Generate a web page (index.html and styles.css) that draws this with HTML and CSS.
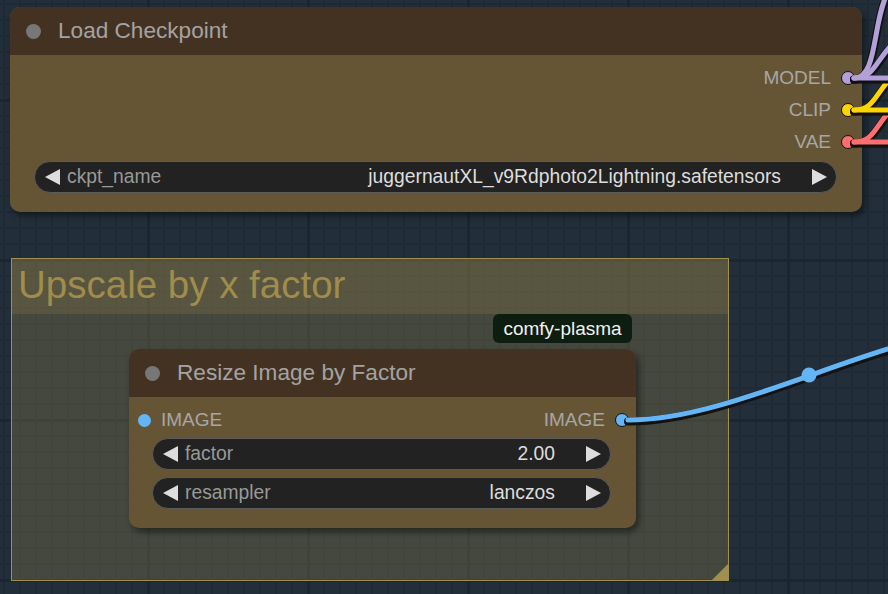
FILE: index.html
```
<!DOCTYPE html>
<html lang="en">
<head>
    <meta charset="UTF-8">
    <meta name="viewport" content="width=device-width, initial-scale=1.0">
    <title>Workflow</title>
    <link rel="stylesheet" href="styles.css">
</head>
<body>
    <div class="canvas">
        <div class="group">
            <div class="group-title">Upscale by x factor</div>
            <span class="group-resize"></span>
        </div>

        <div class="node node-ckpt">
            <div class="node-header">
                <span class="node-dot"></span>
                <span class="node-title">Load Checkpoint</span>
            </div>
            <div class="node-body">
                <div class="slot slot-out">
                    <span class="slot-label">MODEL</span>
                    <span class="slot-dot model"></span>
                </div>
                <div class="slot slot-out">
                    <span class="slot-label">CLIP</span>
                    <span class="slot-dot clip"></span>
                </div>
                <div class="slot slot-out">
                    <span class="slot-label">VAE</span>
                    <span class="slot-dot vae"></span>
                </div>
                <div class="widget">
                    <span class="arrow arrow-left"></span>
                    <span class="w-label">ckpt_name</span>
                    <span class="w-value">juggernautXL_v9Rdphoto2Lightning.safetensors</span>
                    <span class="arrow arrow-right"></span>
                </div>
            </div>
        </div>

        <div class="badge">comfy-plasma</div>

        <div class="node node-resize">
            <div class="node-header">
                <span class="node-dot"></span>
                <span class="node-title">Resize Image by Factor</span>
            </div>
            <div class="node-body">
                <div class="slot slot-io">
                    <span class="slot-in">
                        <span class="slot-dot image in"></span>
                        <span class="slot-label">IMAGE</span>
                    </span>
                    <span class="slot-out">
                        <span class="slot-label">IMAGE</span>
                        <span class="slot-dot image"></span>
                    </span>
                </div>
                <div class="widget">
                    <span class="arrow arrow-left"></span>
                    <span class="w-label">factor</span>
                    <span class="w-value">2.00</span>
                    <span class="arrow arrow-right"></span>
                </div>
                <div class="widget">
                    <span class="arrow arrow-left"></span>
                    <span class="w-label">resampler</span>
                    <span class="w-value">lanczos</span>
                    <span class="arrow arrow-right"></span>
                </div>
            </div>
        </div>

        <!-- links -->
        <svg class="links" width="888" height="594" viewBox="0 0 888 594">
            <g fill="none" stroke-linecap="round">
                <path class="link-shadow" d="M854,142 L900,142"/>
                <path class="link-shadow" d="M854,142 C876,142 874,124 900,100"/>
                <path d="M854,142 L900,142" stroke="#ff6e6e" stroke-width="5"/>
                <path d="M854,142 C876,142 874,124 900,100" stroke="#ff6e6e" stroke-width="5"/>
                <path class="link-shadow" d="M854,110 L900,110"/>
                <path class="link-shadow" d="M854,110 C876,110 874,92 900,68"/>
                <path d="M854,110 L900,110" stroke="#ffd500" stroke-width="5"/>
                <path d="M854,110 C876,110 874,92 900,68" stroke="#ffd500" stroke-width="5"/>
                <path class="link-shadow" d="M854,78 L900,78"/>
                <path class="link-shadow" d="M854,78 C876,78 874,60 900,36"/>
                <path class="link-shadow" d="M854,78 C878,78 872,22 888,-8"/>
                <path d="M854,78 L900,78" stroke="#b3a0d9" stroke-width="5"/>
                <path d="M854,78 C876,78 874,60 900,36" stroke="#b3a0d9" stroke-width="5"/>
                <path d="M854,78 C878,78 872,22 888,-8" stroke="#b3a0d9" stroke-width="5"/>
                <path class="link-shadow" d="M628,420 C740,420 884,330 990,330"/>
                <path d="M628,420 C740,420 884,330 990,330" stroke="#64b5f6" stroke-width="5"/>
            </g>
            <circle cx="809" cy="375" r="7.5" fill="#64b5f6"/>
        </svg>
    </div>
</body>
</html>
```
FILE: styles.css
```
body {
    margin: 0;
    padding: 0;
    font-family: "Liberation Sans", Arial, sans-serif;
    background-color: #222f3b;
    overflow: hidden;
}
.canvas {
    position: relative;
    width: 888px;
    height: 594px;
    overflow: hidden;
    background-color: #222f3b;
    background-image:
        linear-gradient(to right, #1c2631 3px, transparent 3px),
        linear-gradient(to bottom, #1c2631 3px, transparent 3px),
        linear-gradient(to right, #1f2a35 2px, transparent 2px),
        linear-gradient(to bottom, #1f2a35 2px, transparent 2px);
    background-size: 160px 100%, 100% 160px, 16px 16px, 16px 16px;
    background-position: 147px 0, 0 99px, 3px 0, 0 3px;
}

/* group */
.group {
    position: absolute;
    left: 11px;
    top: 258px;
    width: 716px;
    height: 321px;
    border: 1.5px solid #a08f4f;
    background-color: rgba(160, 140, 75, 0.28);
}
.group-title {
    height: 55px;
    background-color: rgba(160, 140, 75, 0.21);
    color: #a08c4b;
    font-size: 38.5px;
    line-height: 52px;
    padding-left: 6px;
    white-space: nowrap;
}
.group-resize {
    position: absolute;
    right: 0;
    bottom: 0;
    width: 16px;
    height: 16px;
    background-color: #a08f4f;
    clip-path: polygon(100% 0, 100% 100%, 0 100%);
}

/* nodes */
.node {
    position: absolute;
    background-color: #665535;
    border-radius: 10px;
    box-shadow: 3px 4px 6px rgba(0, 0, 0, 0.45);
    overflow: hidden;
}
.node-ckpt {
    left: 10px;
    top: 7px;
    width: 852px;
    height: 205px;
}
.node-resize {
    left: 129px;
    top: 349px;
    width: 507px;
    height: 179px;
}
.node-header {
    height: 48px;
    background-color: #433222;
    display: flex;
    align-items: center;
    padding-left: 16px;
}
.node-dot {
    width: 15px;
    height: 15px;
    border-radius: 50%;
    background-color: #777;
    margin-right: 17px;
}
.node-title {
    color: #a3a3a3;
    font-size: 22.6px;
}
.node-body {
    padding-top: 7px;
}
.slot {
    height: 32px;
    display: flex;
    align-items: center;
    font-size: 19px;
    color: #a6a6a6;
}
.slot-out {
    justify-content: flex-end;
    padding-right: 7px;
}
.slot-io {
    justify-content: space-between;
    padding: 0 7px 0 9px;
}
.slot-in, .slot-io .slot-out {
    display: flex;
    align-items: center;
    padding: 0;
}
.slot-dot {
    width: 12px;
    height: 12px;
    border-radius: 50%;
    border: 1.5px solid #111;
    margin-left: 10px;
}
.slot-dot.in {
    width: 13px;
    height: 13px;
    border: none;
    margin: 0 10px 0 0;
}
.model { background-color: #b3a0d9; }
.clip { background-color: #ffd500; }
.vae { background-color: #ff6e6e; }
.image { background-color: #64b5f6; }

/* widgets */
.widget {
    height: 30px;
    margin: 3px 25px 0 24px;
    display: flex;
    align-items: center;
    padding: 0 9px 0 10px;
    background-color: #222;
    border: 1px solid #5a5a5a;
    border-radius: 16px;
    font-size: 19.3px;
}
.node-resize .widget {
    margin: 2px 25px 7px 23px;
}
.arrow {
    width: 15px;
    height: 16px;
    background-color: #ddd;
}
.arrow-left {
    clip-path: polygon(0 50%, 100% 0, 100% 100%);
    margin-right: 7px;
}
.arrow-right {
    clip-path: polygon(0 0, 100% 50%, 0 100%);
}
.w-label {
    flex: 1;
    color: #999;
}
.w-value {
    color: #ddd;
    margin-right: 31px;
}

.badge {
    position: absolute;
    left: 493px;
    top: 314px;
    width: 139px;
    height: 29px;
    background-color: #0d1d10;
    border-radius: 6px;
    color: #f2f2f2;
    font-size: 19px;
    display: flex;
    align-items: center;
    justify-content: center;
}

.links {
    position: absolute;
    left: 0;
    top: 0;
    pointer-events: none;
}
.link-shadow {
    stroke: #111;
    stroke-width: 8;
    transform: translateY(1.5px);
}
```
